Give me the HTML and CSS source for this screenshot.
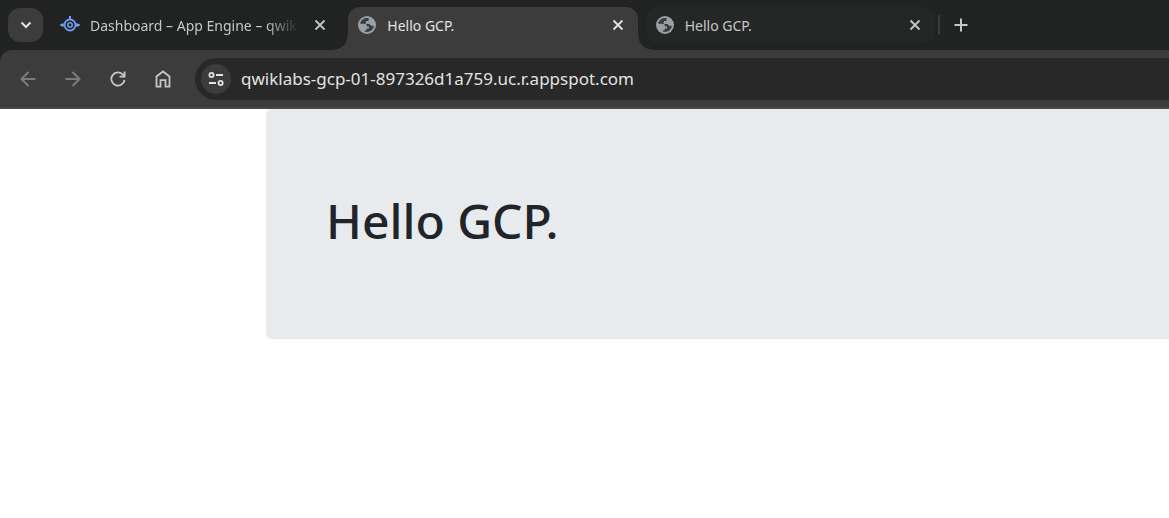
FILE: index.html
```html
<!DOCTYPE html>
<html lang="en">
<head>
<meta charset="utf-8">
<meta name="viewport" content="width=device-width, initial-scale=1">
<title>Hello GCP.</title>
<link rel="stylesheet" href="styles.css">
</head>
<body>
<svg class="defs" aria-hidden="true">
  <symbol id="globe" viewBox="0 0 18 18">
    <circle cx="9" cy="9" r="9" fill="#9aa0a6"/>
    <path class="globe-gap" d="M10.800 2.200C6.500 1.200 2.800 4 2.200 7.800H6.200C8.200 7.800 9 8.800 9 10.600H11V12.400H8.600V14.200H6.800V15.500C11.500 17.200 15.700 13.900 15.800 9.600C14.200 10.300 12.300 9.800 11.600 8.100H8.300C7.300 7.200 7.400 5.400 8.600 4.900H10.400Z"/>
  </symbol>
  <symbol id="close" viewBox="0 0 12 12"><path d="M1.500 1.500L10.500 10.500M10.500 1.500L1.500 10.500" fill="none" stroke="currentColor" stroke-width="1.800"/></symbol>
</svg>
<header class="browser">
  <div class="tabstrip">
    <button class="tab-search" aria-label="Search tabs"><svg width="12" height="8" viewBox="0 0 12 8"><path d="M1.500 1.500L6 6L10.500 1.500" fill="none" stroke="currentColor" stroke-width="2"/></svg></button>
    <nav class="tabs" aria-label="Tabs">
      <div class="tab">
        <svg class="favicon engine" viewBox="0 0 20 20"><g fill="none" stroke="#6f9cf0"><circle cx="10" cy="10" r="5.500" stroke-width="1.800"/><circle cx="10" cy="10" r="2.200" stroke-width="1.600"/></g><path d="M9 1H11V4H9ZM0 9.500L2 8.500H4V11.500H2L0 10.500ZM20 9.500L18 8.500H16V11.500H18L20 10.500Z" fill="#6f9cf0"/></svg>
        <a class="title fade" href="#">Dashboard – App Engine – qwik</a>
        <button class="close" aria-label="Close Dashboard"><svg><use href="#close"/></svg></button>
      </div>
      <div class="tab active">
        <svg class="favicon"><use href="#globe"/></svg>
        <a class="title" href="#" aria-current="page">Hello GCP.</a>
        <button class="close" aria-label="Close Hello GCP."><svg><use href="#close"/></svg></button>
      </div>
      <div class="tab idle">
        <svg class="favicon"><use href="#globe"/></svg>
        <a class="title" href="#">Hello GCP.</a>
        <button class="close" aria-label="Close Hello GCP."><svg><use href="#close"/></svg></button>
      </div>
    </nav>
    <span class="divider"></span>
    <button class="new-tab" aria-label="New tab"><svg width="14" height="14" viewBox="0 0 14 14"><path d="M7 0.500V13.500M0.500 7H13.500" stroke="currentColor" stroke-width="2"/></svg></button>
  </div>
  <div class="toolbar">
    <div class="nav">
      <button class="off" aria-label="Back"><svg viewBox="0 0 16 16"><path d="M8.500 1L1.500 8L8.500 15M1.500 8H15.500" fill="none" stroke="currentColor" stroke-width="2"/></svg></button>
      <button class="off" aria-label="Forward"><svg viewBox="0 0 16 16"><path d="M7.500 1L14.500 8L7.500 15M14.500 8H0.500" fill="none" stroke="currentColor" stroke-width="2"/></svg></button>
      <button aria-label="Reload"><svg viewBox="0 0 16 16"><path d="M14.500 9A6.600 6.600 0 1 1 13 3.700L14.300 5.200M14.600 0.500V5.600H9.500" fill="none" stroke="currentColor" stroke-width="1.800"/></svg></button>
      <button aria-label="Home"><svg class="home" viewBox="0 0 16 18"><path d="M1.500 6.500L8 1.500L14.500 6.500V16.700H10.500V10.200H5.500V16.700H1.500Z" fill="none" stroke="currentColor" stroke-width="1.800"/></svg></button>
    </div>
    <div class="omnibox">
      <button class="site-info" aria-label="View site information"><svg viewBox="0 0 16 16"><g fill="none" stroke="currentColor" stroke-width="1.800"><circle cx="3.500" cy="4" r="2.100"/><path d="M8 4H15M1 12H8"/><circle cx="12.600" cy="12" r="2.100"/></g></svg></button>
      <input class="url" type="text" aria-label="Address" value="qwiklabs-gcp-01-897326d1a759.uc.r.appspot.com" spellcheck="false">
    </div>
  </div>
</header>
<main class="page">
  <section class="jumbotron"><h1>Hello GCP.</h1></section>
</main>
</body>
</html>
```
FILE: styles.css
```css
* { box-sizing: border-box; }
body { margin: 0; background: #fff; font-family: "Noto Sans", "Open Sans", sans-serif; overflow-x: hidden; }
button { border: 0; padding: 0; margin: 0; background: none; color: inherit; display: grid; place-items: center; }
svg { display: block; }
.defs { position: absolute; width: 0; height: 0; }
.browser { background: #202322; color: #c7c7c7; }
.tabstrip { display: flex; height: 50px; padding: 7px 8px 0; align-items: flex-start; }
.tab-search { width: 35px; height: 34px; margin-top: 1px; border-radius: 12px; background: #3c3c3c; color: #e3e3e3; flex: none; }
.tabs { display: flex; gap: 8px; margin-left: 8px; flex: 0 1 884px; min-width: 0; }
.tab { flex: 1 1 0; min-width: 0; height: 36px; display: flex; align-items: center; padding: 0 10px; border-radius: 12px; position: relative; }
.tab.idle { background: #242726; }
.tab.active { height: 43px; padding-bottom: 7px; background: #3c3c3c; border-radius: 12px 12px 0 0; color: #e3e3e3; }
.tab.active::before, .tab.active::after { content: ""; position: absolute; bottom: 0; width: 14px; height: 14px; }
.tab.active::before { right: 100%; background: radial-gradient(circle at 0 0, transparent 13px, #3c3c3c 14px); }
.tab.active::after { left: 100%; background: radial-gradient(circle at 100% 0, transparent 13px, #3c3c3c 14px); }
.favicon { width: 18px; height: 18px; margin-right: 11px; flex: none; }
.engine { width: 20px; height: 20px; margin: 0 10px 0 -1px; }
.globe-gap { fill: #3a3c3d; }
.title { flex: 1; min-width: 0; overflow: hidden; white-space: nowrap; color: inherit; text-decoration: none; font-size: 14px; line-height: 20px; padding-top: 2px; }
.fade { -webkit-mask-image: linear-gradient(to right, #000 calc(100% - 32px), transparent); mask-image: linear-gradient(to right, #000 calc(100% - 32px), transparent); }
.close { width: 20px; height: 20px; margin-left: 12px; flex: none; }
.close svg { width: 12px; height: 12px; }
.divider { width: 2px; height: 20px; margin: 8px 4px 0 3px; background: #3c3c3c; border-radius: 1px; }
.new-tab { width: 34px; height: 36px; }
.toolbar { display: flex; align-items: center; height: 59px; padding-left: 5px; background: #3c3c3c; border-bottom: 2px solid #484848; border-radius: 12px 0 0 0; }
.nav { display: flex; flex: none; margin-right: 10px; }
.nav button { width: 45px; height: 42px; color: #c7c7c7; }
.nav .off { color: #7c7c7c; }
.nav svg { width: 16px; height: 16px; }
.nav .home { height: 18px; }
.omnibox { flex: 1; min-width: 0; display: flex; align-items: center; height: 42px; padding-left: 6px; border-radius: 21px 0 0 21px; background: #282828; }
.site-info { width: 30px; height: 30px; border-radius: 50%; background: #3c3c3c; color: #e3e3e3; flex: none; }
.site-info svg { width: 16px; height: 16px; }
.url { flex: 1; min-width: 0; margin-left: 10px; padding: 0; border: 0; outline: 0; background: none; color: #e3e3e3; font: 17px/24px "Noto Sans", "Open Sans", sans-serif; }
.page { padding-left: 266px; }
.jumbotron { padding: 82px 60px; background: #e7ebee; border-radius: 6px 0 0 6px; }
.jumbotron h1 { margin: 0 0 6px; font-size: 48px; line-height: 60px; font-weight: 500; color: #212529; }
```
